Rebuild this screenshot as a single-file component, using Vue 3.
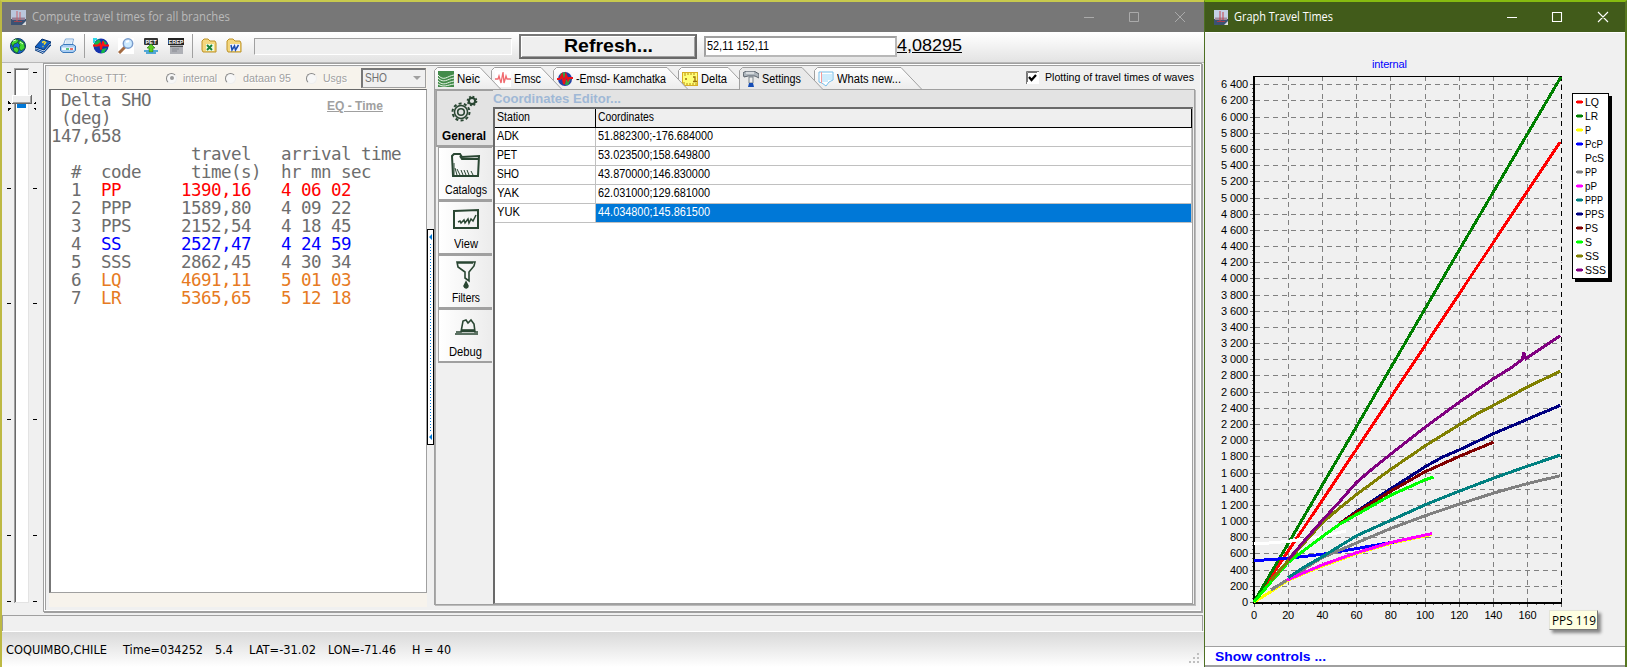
<script setup>
const vFit = {
  mounted(el, binding) {
    const width = el.getBoundingClientRect().width
    el.style.width = binding.value + 'px'
    el.style.transform = `scaleX(${binding.value / width})`
  },
}

const arrivals = [
  { n: 1, code: 'PP', time: '1390,16', at: '4 06 02', tone: 'red' },
  { n: 2, code: 'PPP', time: '1589,80', at: '4 09 22', tone: '' },
  { n: 3, code: 'PPS', time: '2152,54', at: '4 18 45', tone: '' },
  { n: 4, code: 'SS', time: '2527,47', at: '4 24 59', tone: 'blue' },
  { n: 5, code: 'SSS', time: '2862,45', at: '4 30 34', tone: '' },
  { n: 6, code: 'LQ', time: '4691,11', at: '5 01 03', tone: 'orange' },
  { n: 7, code: 'LR', time: '5365,65', at: '5 12 18', tone: 'orange' },
]

const stations = [
  ['ADK', '51.882300;-176.684000', 22, 115],
  ['PET', '53.023500;158.649800', 20, 112],
  ['SHO', '43.870000;146.830000', 22, 112],
  ['YAK', '62.031000;129.681000', 22, 112],
  ['YUK', '44.034800;145.861500', 23, 112],
]

const tabs = [
  { id: 'neic', label: 'Neic', w: 57, top: 46, fit: 23 },
  { id: 'emsc', label: 'Emsc', w: 62, top: 50, fit: 27 },
  { id: 'emsd', label: '-Emsd- Kamchatka', w: 125, top: 114, fit: 90 },
  { id: 'delta', label: 'Delta', w: 61, top: 50, fit: 26 },
  { id: 'settings', label: 'Settings', w: 75, top: 63, fit: 39 },
  { id: 'news', label: 'Whats new...', w: 90, top: 87, fit: 64 },
]

const sections = [
  { id: 'general', label: 'General', fit: 44 },
  { id: 'catalogs', label: 'Catalogs', fit: 42 },
  { id: 'view', label: 'View', fit: 24 },
  { id: 'filters', label: 'Filters', fit: 28 },
  { id: 'debug', label: 'Debug', fit: 33 },
]

const series = [
  { name: 'LQ', w: 14, color: '#ff0000', pts: [[0, 0], [60, 1890], [120, 3810], [179, 5685]] },
  { name: 'LR', w: 13, color: '#008000', pts: [[0, 0], [60, 2170], [120, 4350], [179.5, 6490]] },
  { name: 'P', w: 6, color: '#ffff00', pts: [[0, 0], [10, 130], [20, 270], [30, 360], [40, 445], [60, 600], [80, 725], [104, 835]] },
  { name: 'PcP', w: 18, color: '#0000ff', pts: [[0, 510], [10, 525], [20, 540], [40, 590], [60, 660], [80, 735], [84, 750]] },
  { name: 'PcS', w: 19, color: '#ffffff', pts: [[0, 720], [10, 730], [20, 750], [40, 810], [54, 880]] },
  { name: 'PP', w: 12, color: '#808080', pts: [[10, 150], [20, 280], [30, 420], [40, 550], [60, 730], [80, 910], [100, 1065], [120, 1210], [140, 1345], [160, 1465], [179, 1560]] },
  { name: 'pP', w: 12, color: '#ff00ff', pts: [[19, 270], [30, 370], [40, 460], [60, 610], [80, 735], [104, 845]] },
  { name: 'PPP', w: 18, color: '#008080', pts: [[20, 300], [30, 440], [40, 560], [60, 820], [80, 1010], [100, 1200], [120, 1370], [140, 1530], [160, 1680], [179, 1815]] },
  { name: 'PPS', w: 19, color: '#000080', pts: [[50, 970], [60, 1120], [80, 1400], [100, 1670], [110, 1790], [120, 1880], [140, 2080], [160, 2260], [179, 2430]] },
  { name: 'PS', w: 13, color: '#800000', pts: [[50, 970], [60, 1110], [80, 1370], [100, 1610], [120, 1800], [140, 1975]] },
  { name: 'S', w: 7, color: '#00ff00', pts: [[0, 0], [10, 250], [20, 490], [40, 810], [50, 960], [60, 1080], [80, 1320], [100, 1510], [105, 1545]] },
  { name: 'SS', w: 14, color: '#808000', pts: [[10, 270], [20, 510], [40, 980], [50, 1160], [60, 1330], [80, 1640], [100, 1930], [120, 2190], [130, 2320], [140, 2430], [160, 2660], [179, 2850]] },
  { name: 'SSS', w: 21, color: '#800080', pts: [[20, 520], [30, 770], [40, 1010], [50, 1240], [60, 1480], [70, 1660], [80, 1830], [100, 2160], [120, 2470], [140, 2760], [150, 2890], [157, 3000], [157.7, 3090], [159, 3010], [170, 3165], [179, 3290]] },
]

const gx = (v) => 49 + v * 1.71
const gy = (v) => 570 - v * 0.0809
const line = (pts) => pts.map(([a, b]) => gx(a).toFixed(1) + ',' + gy(b).toFixed(1)).join(' ')
const yTicks = Array.from({ length: 33 }, (_, i) => i * 200)
const yMinor = Array.from({ length: 129 }, (_, i) => i * 50)
const xTicks = Array.from({ length: 9 }, (_, i) => i * 20)
const xMinor = Array.from({ length: 37 }, (_, i) => i * 5)
const fmt = (v) => (v >= 1000 ? Math.floor(v / 1000) + ' ' + String(v % 1000).padStart(3, '0') : String(v))
const yWidth = (v) => (v >= 1000 ? 27 : v ? 18 : 6)
const xWidth = (v) => (v >= 100 ? 18 : v ? 12 : 6)
const pad = (s, n) => String(s).padEnd(n)
</script>

<template>
  <div class="desktop">
    <section class="win main">
      <header class="bar inactive">
        <svg class="appicon" width="15" height="15"><rect width="15" height="15" fill="#b9c6dc" /><path d="M0 9h15v6H0z" fill="#3c5273" /><path d="M1 7.500h13v2.500H1z" fill="#927f96" /><path d="M6 1v10M9 2v8" stroke="#c8636a" fill="none" /><path d="M3 11.500h8" stroke="#9c4650" fill="none" /><path d="M11 15l4-4v4z" fill="#ddd" /></svg>
        <span class="title" v-fit="198">Compute travel times for all branches</span>
        <svg class="sys" width="102" height="12"><path d="M0 6.500h10M45.500 1.500h9v9h-9zM91 1l10 10M101 1l-10 10" fill="none" stroke="#aaa" /></svg>
      </header>

      <div class="toolbar">
        <div class="group first">
          <svg width="16" height="16"><circle cx="8" cy="8" r="7.500" fill="#1668d8" stroke="#113c67" /><path d="M1 5l4-4 4 1-2 3-3 1-1 3zM10 2l4 3 1 5-4 3-2-3 1-3-2-2zM3 10l4-1 2 3-2 3-3-2z" fill="#42d832" stroke="#135915" stroke-width=".7" /><path d="M3 3l3-1M10 4l3 2" stroke="#d9ffd0" /></svg>
          <svg width="16" height="16"><path d="M0 9l7-8 9 3-7 8z" fill="#1262c4" stroke="#08306e" /><path d="M0 9v3l8 3.500L16 7V4l-7 8z" fill="#dfe9f6" stroke="#073a7c" /><path d="M1 11l8 3 6-7" stroke="#0b4aa0" fill="none" /><path d="M7 4.500l2-1 1.500 1L9 6.500M7.500 8.500h1" stroke="#ffe02b" stroke-width="1.500" fill="none" /></svg>
          <svg width="16" height="16"><path d="M3 8l2.500-7h8L12 8z" fill="#fff" stroke="#79a6d7" /><path d="M.5 8.500l3-2H13l2.500 1.500v4.500l-2.500 2H3l-2.500-2z" fill="#a8cdf2" stroke="#3a78ba" /><path d="M2 9.500h12v2.500H2z" fill="#f5faff" /><path d="M6 11h3" stroke="#28b550" stroke-width="1.500" /><path d="M10 11h3" stroke="#e24236" stroke-width="1.500" /><path d="M6 3h6M5.500 5h6" stroke="#aecdea" /></svg>
        </div>
        <div class="group second">
          <svg width="16" height="16"><circle cx="8" cy="8" r="7.500" fill="#1432ad" /><path d="M1 5l5-4 2 3-3 4-3 1zM9 11l5-1-3 5H8zM10 2l4 3-2 3-2-1z" fill="#12b64a" /><path d="M0 1h4M1 0v5" stroke="#31d8e8" stroke-width="2" /><path d="M0 7.500h5l2-2 1 6 2-8 1 4h5" fill="none" stroke="#f11" stroke-width="1.800" /></svg>
          <svg width="16" height="16"><rect width="16" height="16" fill="#fff" /><path d="M1 15l6-6" stroke="#a46b42" stroke-width="3" /><circle cx="10" cy="5.500" r="4.700" fill="#cceaff" stroke="#7a9ccc" stroke-width="1.500" /><path d="M8 4l3-1" stroke="#fff" stroke-width="2" /></svg>
          <svg width="16" height="16"><rect x="1" y="0" width="14" height="7" rx="1" fill="#333" /><text x="2.500" y="5.500" font-size="5.500" font-weight="700" fill="#fff" textLength="11">PET</text><path d="M8 6l4 4h-2v4H6v-4H4z" fill="#62cf22" stroke="#288312" stroke-width=".7" /><path d="M1 13h5M10 13h5M3 15h10" stroke="#2091d0" stroke-width="1.500" /></svg>
          <svg width="16" height="16"><rect width="16" height="7" fill="#222" /><text x=".5" y="5.500" font-size="5.500" font-weight="700" fill="#fff" textLength="15">EREP</text><rect x="2" y="7" width="13" height="9" fill="#aeb0b6" /><path d="M2 8.500h13" stroke="#555" /><path d="M4 11h7M4 13h5" stroke="#8a8c94" /></svg>
        </div>
        <div class="group third">
          <svg width="16" height="16"><path d="M1 3l2-2h4l2 2h5l1 2v9H2L1 12z" fill="#f4d77e" stroke="#bc9227" /><path d="M5 6h8v7H5z" fill="#eef8df" /><path d="M6 7l5 5M11 7l-5 5" stroke="#168139" stroke-width="1.800" /></svg>
          <svg width="16" height="16"><path d="M1 3l2-2h4l2 2h5l1 2v9H2L1 12z" fill="#f4d77e" stroke="#bc9227" /><path d="M4 6h10v7H4z" fill="#eef2ff" /><path d="M5 7l1 5 2.500-4 1 4 3-5" fill="none" stroke="#1b4db0" stroke-width="1.500" /></svg>
        </div>
        <div class="gauge"></div>
        <button class="refresh"><span v-fit="89">Refresh...</span></button>
        <div class="edit"><span v-fit="62">52,11 152,11</span></div>
        <span class="mag" v-fit="65">4,08295</span>
      </div>

      <div class="work">
        <svg class="track" width="41" height="552" shape-rendering="crispEdges">
          <rect x="12" y="5" width="15" height="535" fill="#fff" /><path d="M12.500 540V5.500H27" fill="none" stroke="#a0a0a0" /><path d="M13.500 539V6.500H26" fill="none" stroke="#696969" /><path d="M26.500 6v533H13" fill="none" stroke="#e3e3e3" />
          <path d="M5 9.500h4M31 9.500h4M5 125.500h4M31 125.500h4M5 240.500h4M31 240.500h4M5 356.500h4M31 356.500h4M5 472.500h4M31 472.500h4M5 538.500h4M31 538.500h4" stroke="#000" />
          <path d="M6 38l3 3H6zM6 45h3l-3 3zM34 38l-3 3h3zM34 45h-3l3 3z" fill="#000" />
          <rect x="15" y="40" width="9" height="5" fill="#0078d7" /><rect x="10" y="32" width="20" height="9" fill="#eee" /><path d="M10.500 40V32.500H29" fill="none" stroke="#fff" /><path d="M10 40.500h19.500V32" fill="none" stroke="#696969" /><path d="M11 39.500h17.500V33" fill="none" stroke="#a0a0a0" />
        </svg>

        <div class="frame">
          <div class="left">
            <div class="choose">
              <span class="lbl" v-fit="62">Choose TTT:</span>
              <i class="radio on"></i><span class="r1" v-fit="34">internal</span>
              <i class="radio"></i><span class="r2" v-fit="48">dataan 95</span>
              <i class="radio"></i><span class="r3" v-fit="24">Usgs</span>
              <div class="combo"><span v-fit="22">SHO</span><svg width="8" height="5"><path d="M0 0h8L4 4z" fill="#a0a0a0" /></svg></div>
            </div>
            <div class="listing">
              <div class="top">
                <pre> Delta SHO
 (deg)
147,658</pre>
                <a class="eq" v-fit="56">EQ - Time</a>
              </div>
              <pre>              travel   arrival time
  #  code     time(s)  hr mn sec
<span v-for="a in arrivals" :key="a.n">  {{ a.n }}  <b :class="a.tone">{{ pad(a.code, 8) }}{{ pad(a.time, 10) }}{{ a.at }}</b>{{ '\n' }}</span></pre>
            </div>
          </div>
          <div class="split">
            <svg width="7" height="216"><rect x=".5" y=".5" width="6" height="215" fill="#fff" stroke="#000" /><path d="M5 5v6L2 8zM5 205v6l-3-3z" fill="#0078d7" /><path d="M3.500 15v187" stroke="#0078d7" stroke-dasharray="1 2" /></svg>
          </div>

          <div class="right">
            <div class="tabrow">
              <div v-for="(t, i) in tabs" :key="t.id" class="tab" :style="{ width: t.w + 'px', zIndex: t.id === 'settings' ? 9 : 7 - i }">
                <svg class="shape" :width="t.top + 24" height="23">
                  <defs><linearGradient :id="'g' + t.id" x2="0" y2="1"><stop stop-color="#fff" /><stop offset="1" stop-color="#ececec" /></linearGradient></defs>
                  <path :d="`M.5 22.500V3.500L3.500 .5H${t.top}l21 22z`" :fill="t.id === 'settings' ? '#e9e9e9' : `url(#g${t.id})`" />
                  <path :d="`M.5 23V3.500L3.500 .5H${t.top}l21 22`" fill="none" stroke="#a0a0a0" />
                  <path v-if="t.id !== 'settings'" :d="`M0 22.500H${t.top + 21}`" stroke="#a0a0a0" />
                </svg>
                <svg class="ticon" width="16" height="16">
                  <template v-if="t.id === 'neic'"><rect width="16" height="16" fill="#438b4b" /><path d="M0 4c6 7 9 1 16 0M0 7c6 6 9 1 16 0M0 10c6 6 9 1 16 0M0 13c6 4 9 1 16 0" fill="none" stroke="#e6f4e6" /></template>
                  <template v-else-if="t.id === 'emsc'"><rect width="16" height="16" fill="#fff" /><path d="M0 8h3l1-3 2 7 2-11 1 11 2-7 1 3h4" fill="none" stroke="#f06b70" stroke-width="1.300" /></template>
                  <template v-else-if="t.id === 'emsd'"><circle cx="8" cy="8" r="7" fill="#233da8" /><path d="M3 3l5-2 1 5-5 2zM9 9l5-1-3 6H8z" fill="#2ca345" /><path d="M0 8h3l2-4 2 9 2-9 2 5 1-2h4" fill="none" stroke="#ef1018" stroke-width="2" /></template>
                  <template v-else-if="t.id === 'delta'"><rect x=".5" y="1.500" width="15" height="13" fill="#ffff77" stroke="#d8ae22" /><path d="M3 2v3M6 2v2M9 2v2M12 2v2M2 14v-3M5 14v-2M8 14v-2M11 14v-2M14 14v-2" stroke="#b88c12" /><path d="M3 8h2M11 6h2v4M11 10.500h4" stroke="#9b7208" fill="none" stroke-width="1.300" /></template>
                  <template v-else-if="t.id === 'settings'"><path d="M0 2l3-2h8l5 3v4l-4-2H5L1 6z" fill="#aeb6bd" stroke="#59616a" /><path d="M3 2h8" stroke="#fff" /><path d="M6 6h4v6H6z" fill="#eee" stroke="#79838a" /><path d="M6 12h4l1 4H5z" fill="#164db5" /></template>
                  <template v-else><path d="M1 1h14v8l-4 2-3 4-4-3-3-1z" fill="#fff" stroke="#75bde8" /><path d="M3 4h11M3 6h11M3 8h11M3 10h7" stroke="#9ddafa" /><path d="M3.500 1v11" stroke="#f39b9b" /></template>
                </svg>
                <span v-fit="t.fit">{{ t.label }}</span>
              </div>
              <div class="check"><svg width="13" height="13"><rect width="13" height="13" fill="#fff" /><path d="M.5 13V.5H13M1.500 11V1.500H11" fill="none" stroke="#777" /><path d="M3 6l2.500 3L10 4" fill="none" stroke="#000" stroke-width="2.200" /></svg><span v-fit="149">Plotting of travel times of waves</span></div>
            </div>

            <div class="pane">
              <nav class="side">
                <div v-for="s in sections" :key="s.id" class="sec" :class="s.id">
                  <svg width="30" height="30" fill="none" stroke="#294632" stroke-width="1.600">
                    <template v-if="s.id === 'general'"><circle cx="12" cy="18" r="6.500" stroke-width="1.500" /><circle cx="12" cy="18" r="8.500" stroke-width="2" stroke-dasharray="3 2.340" /><circle cx="12" cy="18" r="3.300" /><circle cx="23" cy="7" r="3.200" stroke-width="2.200" /><circle cx="23" cy="7" r="4.600" stroke-width="1.500" stroke-dasharray="1.800 1.812" /></template>
                    <template v-else-if="s.id === 'catalogs'"><path d="M2 25L1 5l2-2h6l2 3 17-1-1 20zM9 5l2 3h17" stroke-width="2" /><path d="M3 24V12M6 24l-2-7M9 24l-3-6M12 24l-2-5M15 24l-2-5M18 24l-2-5M22 24l-2-4" stroke-width="1" /></template>
                    <template v-else-if="s.id === 'view'"><path d="M3 6l24-1v18H3z" stroke-width="2" /><path d="M7 17l2-1 1 2 3-3 1 3 3-4 1 4 2-4 2 2 3-6" stroke-width="1.500" /></template>
                    <template v-else-if="s.id === 'filters'"><path d="M6 3h18l-1 4-5 6v9l-4-3v-6L7 8zM6 4h16" /><path d="M15 23l-2 4c1 3 4 2 4 0z" fill="#294632" /></template>
                    <template v-else><path d="M4 21h23M5 19h5l2-11 3-1 2 3 3-3 3 4 1 8h3M10 17h14" /><path d="M10 18h14" stroke-width="2.500" /></template>
                  </svg>
                  <span v-fit="s.fit">{{ s.label }}</span>
                </div>
              </nav>
              <div class="editor">
                <h3><span v-fit="128">Coordinates Editor...</span></h3>
                <div class="grid">
                  <div class="row head"><div><span v-fit="33">Station</span></div><div><span v-fit="56">Coordinates</span></div></div>
                  <div v-for="s in stations" :key="s[0]" class="row" :class="{ sel: s[0] === 'YUK' }">
                    <div><span v-fit="s[2]">{{ s[0] }}</span></div><div><span v-fit="s[3]">{{ s[1] }}</span></div>
                  </div>
                </div>
              </div>
            </div>
          </div>
        </div>
      </div>

      <div class="progress"></div>
      <footer class="status">
        <span v-fit="101">COQUIMBO,CHILE</span><span class="s2" v-fit="80">Time=034252</span><span class="s3" v-fit="18">5.4</span><span class="s4" v-fit="67">LAT=-31.02</span><span class="s5" v-fit="68">LON=-71.46</span><span class="s6" v-fit="39">H = 40</span>
        <svg class="grip" width="11" height="11"><path d="M8 0h2v2H8zM4 4h2v2H4zM8 4h2v2H8zM0 8h2v2H0zM4 8h2v2H4zM8 8h2v2H8z" fill="#bfbfbf" /></svg>
      </footer>
    </section>

    <section class="win graph">
      <header class="bar active">
        <svg class="appicon" width="14" height="15"><rect width="14" height="15" fill="#c4d0e4" /><path d="M0 9h14v6H0z" fill="#3c5273" /><path d="M1 7.500h12v2.500H1z" fill="#a08c9e" /><path d="M6 1v10M9 2v8" stroke="#c3434c" fill="none" /><path d="M3 11.500h8" stroke="#a83c48" fill="none" /><path d="M10 15l4-4v4z" fill="#ddd" /></svg>
        <span class="title" v-fit="99">Graph Travel Times</span>
        <svg class="sys" width="102" height="12"><path d="M0 6.500h10M45.500 1.500h9v9h-9zM91 1l10 10M101 1l-10 10" fill="none" stroke="#fff" stroke-width="1.100" /></svg>
      </header>
      <div class="chart">
        <svg class="plot" width="420" height="613" font-family="Liberation Sans, Arial, sans-serif" font-size="11">
          <text x="167" y="36" fill="#0000ff" textLength="35">internal</text>
          <g shape-rendering="crispEdges">
            <path v-for="v in yTicks" :key="'h' + v" :d="`M50 ${Math.round(gy(v)) + .5}H357`" stroke="#808080" stroke-dasharray="5 4" />
            <path v-for="v in xTicks.slice(1)" :key="'v' + v" :d="`M${Math.floor(gx(v)) + .5} 44V570`" stroke="#808080" stroke-dasharray="5 4" />
            <path v-for="v in yTicks" :key="'t' + v" :d="`M45 ${Math.round(gy(v)) + .5}h4`" stroke="#606060" />
            <path v-for="v in yMinor" :key="'m' + v" :d="`M47 ${Math.round(gy(v)) + .5}h2`" stroke="#606060" />
            <path v-for="v in xMinor" :key="'n' + v" :d="`M${Math.floor(gx(v)) + .5} 571v${v % 20 ? 2 : 4}`" stroke="#606060" />
            <path d="M49 44.500H357" stroke="#000" /><path d="M49 44V571M48 570.500H357" stroke="#000" stroke-width="2" /><path d="M356.500 44V570" stroke="#000" stroke-dasharray="5 4" />
          </g>
          <polyline v-for="s in series" :key="s.name" :points="line(s.pts)" fill="none" :stroke="s.color" stroke-width="3" shape-rendering="crispEdges" />
          <text v-for="v in yTicks" :key="'yl' + v" :x="43 - yWidth(v)" :y="gy(v) + 4" :textLength="yWidth(v)">{{ fmt(v) }}</text>
          <text v-for="v in xTicks" :key="'xl' + v" :x="gx(v) - xWidth(v) / 2" y="587" :textLength="xWidth(v)">{{ v }}</text>
        </svg>
        <ul class="legend">
          <li v-for="s in series" :key="s.name"><svg width="7" height="4"><path d="M1 .5h5v3H1zM0 1h7v2H0z" :fill="s.color" /></svg><span v-fit="s.w">{{ s.name }}</span></li>
        </ul>
        <div class="tip"><span v-fit="44">PPS  119</span></div>
      </div>
      <div class="controls"><span v-fit="111">Show controls ...</span></div>
    </section>
  </div>
</template>

<style>
body { margin: 0; overflow: hidden; }
</style>

<style scoped>
* { box-sizing: border-box; }
.desktop { display: flex; width: 1627px; height: 667px; overflow: hidden; background: #f0f0f0; font: 11px/13px "Liberation Sans", Arial, sans-serif; color: #000; }
span, .eq { display: inline-block; white-space: pre; flex: none; transform-origin: left center; text-align: left; }
svg { flex: none; display: block; }
.win { display: flex; flex-direction: column; flex: none; height: 667px; }
.main { width: 1204px; border-left: 2px solid #bdb943; border-top: 2px solid #c8ca4e; }
.bar { height: 30px; display: flex; align-items: center; flex: none; font: 12px/16px "Open Sans", "Noto Sans", sans-serif; }
.bar .sys { margin-left: auto; }
.inactive { background: #777; color: #bababa; padding: 0 18px 0 9px; width: 1202px; }
.title { margin-left: 6px; }
.toolbar { height: 31px; display: flex; align-items: center; background: linear-gradient(#fff, #e3e3e3); border-top: 1px solid #fff; border-bottom: 1px solid #b8b8b8; flex: none; padding-bottom: 3px; }
.group { display: flex; gap: 9px; padding: 0 8px; height: 24px; align-items: center; border-right: 1px solid #a0a0a0; }
.first { width: 83px; }
.second { width: 108px; }
.third { border: 0; width: 60px; }
.gauge { width: 258px; height: 17px; border: 1px solid #a0a0a0; border-right-color: #fff; border-bottom-color: #fff; background: #efefef; margin-left: 1px; }
.refresh { width: 178px; height: 25px; margin-left: 7px; padding: 0; background: #efefef; border: 2px solid #696969; border-top-color: #777; border-left-color: #777; box-shadow: inset 1px 1px #fff, inset -1px -1px #a0a0a0; font: bold 19px/20px "Liberation Sans", sans-serif; }
.edit { width: 193px; height: 21px; margin-left: 7px; border: 2px solid #a0a0a0; border-right-color: #b8b8b8; border-bottom-color: #b8b8b8; background: #fff; padding: 1px 0 0 1px; font-size: 12px; line-height: 14px; }
.mag { font-size: 17px; line-height: 18px; text-decoration: underline; }
.work { height: 552px; display: flex; flex: none; background: #f0f0f0; }
.track { background: #f0f0f0; }
.frame { width: 1159px; height: 549px; display: flex; border: 1px solid #a0a0a0; outline: 1px solid #fff; outline-offset: -2px; box-shadow: inset 3px 3px 0 -1px #a0a0a0, 1px 1px #a0a0a0; padding: 3px 0 0 5px; }
.left { width: 378px; height: 540px; background: #f7f3ec; display: flex; flex-direction: column; }
.choose { height: 22px; display: flex; align-items: center; color: #a0a0a0; text-shadow: 1px 1px #fff; padding-left: 16px; flex: none; }
.lbl { margin-right: 39px; }
.radio { width: 11px; height: 11px; flex: none; border: 1.500px solid #888; border-right-color: #eee; border-bottom-color: #eee; border-radius: 50%; background: #f7f7f7; display: flex; align-items: center; justify-content: center; }
.on::after { content: ''; width: 4px; height: 4px; border-radius: 50%; background: #999; }
.r1 { margin: 0 8px 0 6px; }
.r2 { margin: 0 15px 0 7px; }
.r3 { margin: 0 14px 0 6px; }
.combo { width: 65px; height: 20px; border: 1px solid #a0a0a0; border-top: 2px solid #777; border-left: 2px solid #777; background: #f0f0f0; display: flex; align-items: center; justify-content: space-between; padding: 0 4px 0 2px; text-shadow: none; color: #707070; font-size: 12px; }
.listing { height: 504px; border: 1px solid #a0a0a0; border-top-color: #696969; border-left: 2px solid #777; background: #fff; flex: none; padding: 1px 0 0; }
.top { display: flex; height: 54px; }
.top pre { width: 276px; }
.listing pre { margin: 0; font: 17.500px/18px "DejaVu Sans Mono", monospace; letter-spacing: -.535px; color: #6d6d6d; }
.listing pre span { display: inline; }
.listing b { font-weight: 400; }
.listing .red { color: #f00; }
.listing .blue { color: #00f; }
.listing .orange { color: #e67a22; }
.eq { height: 13px; margin-top: 9px; color: #a0a0a0; font-weight: 700; font-size: 12px; text-decoration: underline; }
.split { width: 7px; padding-top: 162px; }
.right { width: 765px; display: flex; flex-direction: column; }
.tabrow { display: flex; height: 22px; }
.tab { position: relative; height: 22px; display: flex; align-items: center; flex: none; font-size: 12px; }
.shape { position: absolute; left: 0; top: 0; }
.ticon { position: relative; margin: 2px 3px 0 4px; }
.tab span { position: relative; margin-top: 2px; }
.check { display: flex; align-items: center; gap: 6px; margin-left: 122px; height: 20px; }
.pane { width: 761px; height: 516px; border: 1px solid #a0a0a0; display: flex; background: #f0f0f0; box-shadow: inset 1px 1px #aaa, 1px 1px #bbb; }
.side { width: 58px; }
.sec { height: 54px; width: 54px; margin-left: 3px; border: 2px solid #a0a0a0; border-width: 1px 0 2px 1px; background: linear-gradient(90deg, #fff, #ececec); display: flex; flex-direction: column; align-items: center; padding-top: 3px; font-size: 12px; }
.sec span { margin-top: 3px; }
.sec.general { height: 57px; width: 57px; margin-left: 1px; background: #e3e3e3; font-weight: 700; border-right: 0; padding: 3px 2px 0 0; }
.sec.general span { margin-top: 6px; }
.editor { width: 701px; display: flex; flex-direction: column; }
h3 { margin: 0; background: #e3e3e3; color: #9fb8d6; height: 17px; font-size: 13px; line-height: 17px; }
.grid { height: 497px; width: 700px; background: #fff; border: 1px solid #a0a0a0; border-top: 2px solid #696969; border-left: 2px solid #696969; font-size: 12px; line-height: 16px; }
.row { display: grid; grid-template-columns: 101px 596px; height: 19px; border-bottom: 1px solid #c0c0c0; }
.row div { padding-left: 2px; border-right: 1px solid #c0c0c0; }
.head { background: #efefef; border-bottom-color: #000; }
.head div { border-color: #000; }
.sel div:last-child { background: #0078d7; color: #fff; }
.progress { height: 16px; border: 1px solid #a0a0a0; border-bottom: 0; background: #f0f0f0; flex: none; width: 1201px; }
.status { height: 36px; background: linear-gradient(#d9d9d9, #fff); border-top: 1px solid #fff; display: flex; padding: 11px 0 0 4px; position: relative; font: 12px/14px "DejaVu Sans", sans-serif; }
.s2 { margin-left: 16px; }
.s3 { margin-left: 12px; }
.s4 { margin-left: 16px; }
.s5 { margin-left: 12px; }
.s6 { margin-left: 16px; }
.grip { position: absolute; right: 4px; bottom: 3px; }
.graph { width: 423px; border: 1px solid #4d6f22; border-right: 2px solid #587820; border-top: 2px solid #86bb10; border-bottom: 0; }
.active { background: #415b1a; color: #fff; padding: 0 16px 0 9px; }
.chart { height: 614px; background: #f0f0f0; position: relative; border-top: 1px solid #fff; }
.plot { margin-top: -1px; }
.legend { position: absolute; left: 367px; top: 60px; width: 37px; height: 186px; margin: 0; padding: 1px 0 0 3px; border: 1px solid #000; background: #fff; box-shadow: 3px 3px #000; list-style: none; }
.legend li { height: 14px; display: flex; align-items: center; gap: 2px; }
.tip { position: absolute; left: 344px; top: 577px; width: 49px; height: 20px; background: #ffffe1; border: 1px solid #e4e4d8; border-right-color: #777; border-bottom-color: #777; box-shadow: 3px 3px 3px #888; padding: 2px 0 0 2px; font: 12px/15px "Open Sans", sans-serif; }
.controls { height: 21px; background: #fff; border-top: 1px solid #a0a0a0; border-bottom: 2px solid #a0a0a0; color: #00f; font-weight: 700; font-size: 13px; line-height: 19px; padding-left: 10px; }
</style>
